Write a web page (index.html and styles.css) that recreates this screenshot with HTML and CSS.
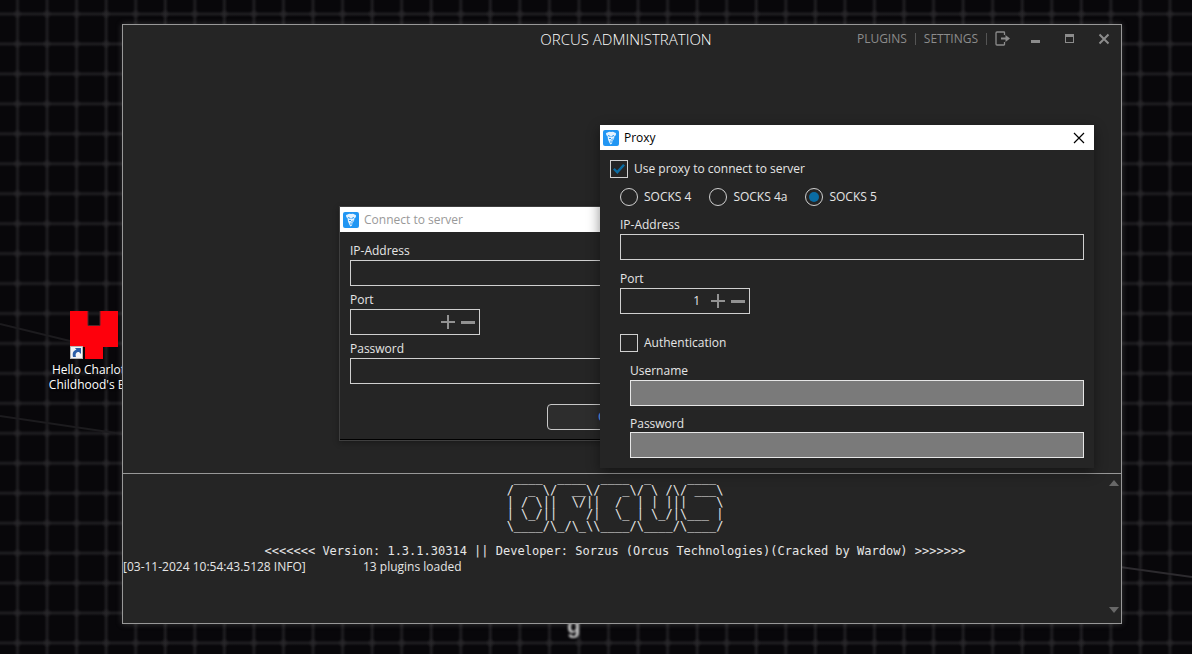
FILE: index.html
```html
<!DOCTYPE html>
<html lang="en">
<head>
<meta charset="utf-8">
<meta name="viewport" content="width=device-width, initial-scale=1">
<title>Orcus Administration</title>
<link rel="stylesheet" href="styles.css">
</head>
<body>
<div class="desktop">
  <svg class="wallpaper" aria-hidden="true">
    <defs>
      <linearGradient id="fadeX"><stop offset="0" stop-color="#1e1d20" stop-opacity="0"/><stop offset=".5" stop-color="#1e1d20"/><stop offset="1" stop-color="#1e1d20" stop-opacity="0"/></linearGradient>
      <linearGradient id="fadeY" x2="0" y2="1"><stop offset="0" stop-color="#1e1d20" stop-opacity="0"/><stop offset=".5" stop-color="#1e1d20"/><stop offset="1" stop-color="#1e1d20" stop-opacity="0"/></linearGradient>
      <radialGradient id="knot"><stop offset="0" stop-color="#343236"/><stop offset="1" stop-color="#343236" stop-opacity="0"/></radialGradient>
      <pattern id="grid" x="2.5" y="-1" width="29.55" height="29.95" patternUnits="userSpaceOnUse">
        <rect x="12" width="6" height="30" fill="url(#fadeX)"/>
        <rect y="12" width="30" height="6" fill="url(#fadeY)"/>
        <circle cx="15" cy="15" r="5" fill="url(#knot)" opacity=".5"/>
      </pattern>
    </defs>
    <rect width="100%" height="100%" fill="#08070a"/>
    <rect width="100%" height="100%" fill="url(#grid)"/>
    <path d="M1120 567L1192 577" stroke="#2c2a2e" stroke-width="2" fill="none"/>
    <path d="M0 324L70 341M0 416L122 434" stroke="#1c1b1e" stroke-width="2" fill="none"/>
  </svg>
  <span class="wallpaper-word">g</span>

  <a class="shortcut" href="#">
    <svg width="48" height="48" viewBox="0 0 48 48" aria-hidden="true">
      <path d="M0 0H18V15H30V0H48V36H33V48H15V36H0Z" fill="#fe000c"/>
      <path d="M18 0V14.500H30V0" fill="none" stroke="#50282c"/>
      <rect x=".5" y="35.500" width="12" height="12" fill="#f4f4f6" stroke="#b5b5b5"/>
      <path d="M3 46C2 41 4 39 6.500 39L5 37H11V43L9 41C6 41 5 43 6 46Z" fill="#2c5fa8"/>
    </svg>
    <span>Hello Charlotte<br>Childhood's End</span>
  </a>

  <main class="app">
    <header class="app-bar">
      <h1 class="app-title">ORCUS ADMINISTRATION</h1>
      <nav class="app-tools">
        <button class="tool tool-text" type="button">PLUGINS</button>
        <button class="tool tool-text" type="button">SETTINGS</button>
        <button class="tool tool-exit" type="button" aria-label="Log out">
          <svg width="16" height="16" viewBox="0 0 16 16"><path d="M9.500 4V1.500Q9.500 1 9 1H2Q1 1 1 2V13Q1 14 2 14H9Q9.500 14 9.500 13.500V11" fill="none" stroke="currentColor" stroke-width="1.300"/><path d="M6 6.500H10.500V4L15 7.500L10.500 11V8.500H6Z" fill="currentColor"/></svg>
        </button>
        <button class="tool tool-window" type="button" aria-label="Minimize">
          <svg width="12" height="12" viewBox="0 0 12 12"><path d="M1 7H10V10H1Z" fill="currentColor"/></svg>
        </button>
        <button class="tool tool-window" type="button" aria-label="Maximize">
          <svg width="12" height="12" viewBox="0 0 12 12"><path d="M1 1H10V10H1ZM2 4V9H9V4Z" fill="currentColor" fill-rule="evenodd"/></svg>
        </button>
        <button class="tool tool-window" type="button" aria-label="Close">
          <svg width="12" height="12" viewBox="0 0 12 12"><path d="M1.500 1.500L10.500 10.500M10.500 1.500L1.500 10.500" stroke="currentColor" stroke-width="2"/></svg>
        </button>
      </nav>
    </header>
    <section class="workspace"></section>
    <section class="console">
      <div class="console-text">
<pre class="banner"> ____  ____  ____  _     ____ 
/  _ \/  __\/   _\/ \ /\/ ___\
| / \||  \/||  /  | | |||    \
| \_/||    /|  \_ | \_/|\___ |
\____/\_/\_\\____/\____/\____/</pre>
        <p class="version">&lt;&lt;&lt;&lt;&lt;&lt;&lt; Version: 1.3.1.30314 || Developer: Sorzus (Orcus Technologies)(Cracked by Wardow) &gt;&gt;&gt;&gt;&gt;&gt;&gt;</p>
        <p class="log"><span>[03-11-2024 10:54:43.5128 INFO]</span><span>13 plugins loaded</span></p>
      </div>
      <div class="scroll">
        <button class="scroll-arrow" type="button" aria-label="Scroll up"><svg width="10" height="6" viewBox="0 0 10 6"><path d="M0 6L5 0L10 6Z" fill="currentColor"/></svg></button>
        <button class="scroll-arrow" type="button" aria-label="Scroll down"><svg width="10" height="6" viewBox="0 0 10 6"><path d="M0 0H10L5 6Z" fill="currentColor"/></svg></button>
      </div>
    </section>
  </main>

  <svg width="0" height="0" class="symbols" aria-hidden="true">
    <symbol id="logo" viewBox="0 0 16 16">
      <rect width="16" height="16" rx="2" fill="#2196f3"/>
      <path d="M3 4Q2.500 2.500 4.500 2.500Q6 1.500 8 2Q10.500 1.300 11.500 2.500Q13.500 2.500 13 4.500Q12.500 6 11.500 6L11 9L9.500 10.500L9 13.500L7.500 14.500L6.500 13L5 9.500L4.500 6Q3.500 6 3 4Z" fill="#e4f2fe"/>
      <path d="M5 5.500L7.500 6.500M11 5.500L8.500 6.500M6 8.500H8M10 8.500L8 10.500M7 12H9" stroke="#2196f3" fill="none"/>
    </symbol>
  </svg>

  <form class="dialog dialog-connect">
    <header class="dialog-bar">
      <svg class="logo" width="16" height="16"><use href="#logo"/></svg>
      <h2 class="dialog-title">Connect to server</h2>
    </header>
    <div class="dialog-body">
      <div class="field">
        <label for="c-ip">IP-Address</label>
        <input class="box" id="c-ip" type="text">
      </div>
      <div class="field">
        <label for="c-port">Port</label>
        <div class="box stepper">
          <input id="c-port" type="text" inputmode="numeric">
          <button type="button" class="plus" aria-label="Increase"></button>
          <button type="button" class="minus" aria-label="Decrease"></button>
        </div>
      </div>
      <div class="field">
        <label for="c-pass">Password</label>
        <input class="box" id="c-pass" type="password">
      </div>
      <button class="connect" type="button">Connect</button>
    </div>
  </form>

  <form class="dialog dialog-proxy">
    <header class="dialog-bar">
      <svg class="logo" width="16" height="16"><use href="#logo"/></svg>
      <h2 class="dialog-title">Proxy</h2>
      <button class="dialog-close" type="button" aria-label="Close">
        <svg width="12" height="12" viewBox="0 0 12 12"><path d="M1 1L11 11M11 1L1 11" stroke="#000" stroke-width="1.200"/></svg>
      </button>
    </header>
    <div class="dialog-body">
      <label class="option"><input class="check" type="checkbox" checked>Use proxy to connect to server</label>
      <div class="indent">
        <div class="radios">
          <label class="option"><input class="radio" type="radio" name="kind">SOCKS 4</label>
          <label class="option"><input class="radio" type="radio" name="kind">SOCKS 4a</label>
          <label class="option"><input class="radio" type="radio" name="kind" checked>SOCKS 5</label>
        </div>
        <div class="field">
          <label for="p-ip">IP-Address</label>
          <input class="box" id="p-ip" type="text">
        </div>
        <div class="field">
          <label for="p-port">Port</label>
          <div class="box stepper">
            <input id="p-port" type="text" inputmode="numeric" value="1">
            <button type="button" class="plus" aria-label="Increase"></button>
            <button type="button" class="minus" aria-label="Decrease"></button>
          </div>
        </div>
        <label class="option auth"><input class="check" type="checkbox">Authentication</label>
        <div class="indent credentials">
          <div class="field">
            <label for="p-user">Username</label>
            <input class="box" id="p-user" type="text" disabled>
          </div>
          <div class="field field-tight">
            <label for="p-pass">Password</label>
            <input class="box" id="p-pass" type="password" disabled>
          </div>
        </div>
      </div>
    </div>
  </form>
</div>
</body>
</html>
```
FILE: styles.css
```css
* { box-sizing: border-box; }

body {
  margin: 0;
  background: #08070a;
  color: #e6e6e6;
  font: 12px/18px "Open Sans", "Noto Sans", sans-serif;
}

button, input { font: inherit; color: inherit; }
button { border: 0; padding: 0; background: none; }
h1, h2, p, pre { margin: 0; }
svg { display: block; }

.desktop {
  position: relative;
  height: 100vh;
  overflow: hidden;
}

.wallpaper {
  position: absolute;
  inset: 0;
  width: 100%;
  height: 100%;
}

.wallpaper-word {
  position: absolute;
  left: 567px;
  bottom: 16px;
  font: bold 22px/24px "Liberation Sans", sans-serif;
  color: #c4c4c4;
  filter: blur(1px);
}

.symbols { position: absolute; }

.shortcut {
  position: absolute;
  left: 44px;
  top: 311px;
  width: 100px;
  display: flex;
  flex-direction: column;
  align-items: center;
  gap: 3px;
  color: #fff;
  line-height: 15px;
  text-align: center;
  text-decoration: none;
  white-space: nowrap;
  text-shadow: 1px 1px 2px #000;
}

/* Main window */
.app {
  position: absolute;
  inset: 24px 70px 30px 122px;
  display: flex;
  flex-direction: column;
  background: #252525;
  border: 1px solid #989898;
  box-shadow: 0 0 6px rgba(120, 120, 120, .4);
}

.app-bar {
  display: grid;
  grid-template-columns: 1fr auto 1fr;
  align-items: center;
  height: 28px;
  padding-left: 8px;
}

.app-title {
  grid-column: 2;
  font-size: 15px;
  font-weight: 300;
  color: #fff;
}

.app-tools {
  display: flex;
  justify-content: flex-end;
  align-items: center;
  color: #8c8c8c;
}

.tool {
  display: flex;
  align-items: center;
  justify-content: center;
}

.tool-text {
  padding-right: 8px;
  margin-right: 8px;
  border-right: 1px solid #555;
  line-height: 12px;
}

.tool-exit { width: 16px; margin-right: 8px; }
.tool-window { width: 34px; height: 28px; }

.workspace { flex: 1; }

.console {
  display: flex;
  height: 150px;
  border-top: 1px solid #989898;
}

.console-text { flex: 1; }

.banner, .version {
  font-family: "DejaVu Sans Mono", monospace;
  font-size: 12px;
}

.banner {
  width: max-content;
  margin: -2px auto 11px;
  line-height: 12px;
}

.version { line-height: 16px; text-align: center; }

.log {
  display: grid;
  grid-template-columns: 240px 1fr;
  line-height: 16px;
}

.scroll {
  display: flex;
  flex-direction: column;
  justify-content: space-between;
  align-items: center;
  width: 14px;
  padding: 6px 0 10px;
  color: #686868;
}

/* Dialogs */
.dialog {
  position: absolute;
  background: #252525;
}

.dialog-connect {
  left: 339px;
  top: 206px;
  width: 566px;
  border: 1px solid #3f3f3f;
  box-shadow: inset 0 -1px 0 #000, 0 2px 6px rgba(0, 0, 0, .3);
}

.dialog-proxy {
  left: 600px;
  top: 125px;
  width: 494px;
  box-shadow: 0 4px 12px rgba(0, 0, 0, .45);
}

.dialog-bar {
  display: flex;
  align-items: center;
  gap: 5px;
  height: 25px;
  padding-left: 3px;
  background: #fff;
}

.dialog-title { flex: 1; font-size: 12px; font-weight: 400; color: #000; }
.dialog-connect .dialog-title { color: #999; }
.dialog-close { padding: 9px; }

.dialog-body {
  display: flex;
  flex-direction: column;
  gap: 10px;
  padding: 10px;
}

.dialog-connect .dialog-body { gap: 5px; }

.indent {
  display: flex;
  flex-direction: column;
  gap: 10px;
  padding-left: 10px;
}

.field { display: flex; flex-direction: column; }
.field-tight { line-height: 16px; }

.box {
  width: 100%;
  height: 26px;
  padding: 0 4px;
  border: 1px solid #d0d0d0;
  border-radius: 0;
  background: transparent;
  outline: 0;
}

.box:disabled { background: #7a7a7a; border-color: #e6e6e6; }

.stepper {
  display: flex;
  width: 130px;
  padding: 0 1px 0 4px;
}

.stepper input {
  flex: 1;
  min-width: 0;
  padding: 0 8px 0 0;
  border: 0;
  background: none;
  text-align: right;
  outline: 0;
}

.stepper button {
  display: grid;
  place-items: center;
  width: 20px;
}

.stepper button::before,
.plus::after {
  content: "";
  grid-area: 1 / 1;
  width: 14px;
  height: 2px;
  background: #929292;
}

.stepper .minus::before { height: 3px; }
.plus::after { width: 2px; height: 14px; }

.connect {
  align-self: center;
  width: 150px;
  height: 26px;
  margin-top: 15px;
  border: 1px solid #c8c8c8;
  border-radius: 4px;
  background: #2d2d2d;
  color: #5b9bf0;
  font-weight: 600;
}

.option {
  display: flex;
  align-items: center;
  gap: 6px;
  line-height: 20px;
  height: 18px;
}

.check, .radio {
  appearance: none;
  display: grid;
  place-items: center;
  flex: none;
  width: 18px;
  height: 18px;
  margin: 0;
  border: 1px solid #d0d0d0;
}

.radio { border-radius: 50%; }

.check:checked::before {
  content: "";
  width: 12px;
  height: 10px;
  background: #0a6ca3;
  clip-path: polygon(0 54%, 14% 40%, 34% 64%, 84% 0, 100% 14%, 36% 100%);
}

.radio:checked::before {
  content: "";
  width: 10px;
  height: 10px;
  border-radius: 50%;
  background: #0a6ca3;
}

.radios { display: flex; gap: 18px; }
.auth { margin-top: 10px; }
```
